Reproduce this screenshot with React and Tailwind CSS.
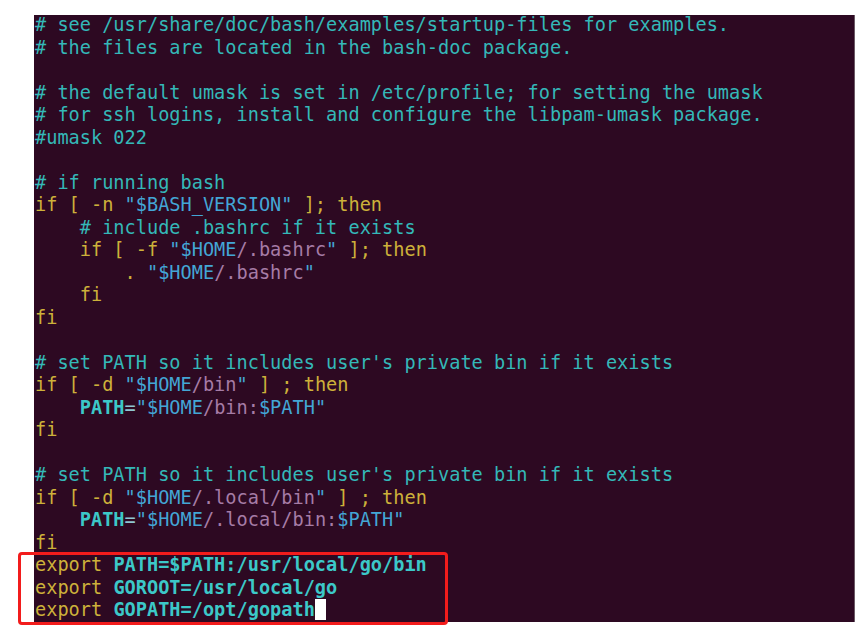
import React from 'react';

const C = {
  cm: 'text-[#34b8b8]',
  kw: 'text-[#cdb13a]',
  var: 'text-[#43a6d6]',
  str: 'text-[#a67ca6]',
  id: 'text-[#3cc8c8] font-bold',
  eq: 'text-[#8fc7d2]',
  pl: 'text-[#d8d8d8]',
};

// each line is a list of [text, colorKey]
const lines = [
  [['# see /usr/share/doc/bash/examples/startup-files for examples.', 'cm']],
  [['# the files are located in the bash-doc package.', 'cm']],
  [],
  [['# the default umask is set in /etc/profile; for setting the umask', 'cm']],
  [['# for ssh logins, install and configure the libpam-umask package.', 'cm']],
  [['#umask 022', 'cm']],
  [],
  [['# if running bash', 'cm']],
  [['if [ -n ', 'kw'], ['"$BASH_VERSION"', 'var'], [' ]; then', 'kw']],
  [['    # include .bashrc if it exists', 'cm']],
  [['    if [ -f ', 'kw'], ['"$HOME', 'var'], ['/.bashrc', 'str'], ['"', 'var'], [' ]; then', 'kw']],
  [['        . ', 'kw'], ['"$HOME', 'var'], ['/.bashrc', 'str'], ['"', 'var']],
  [['    fi', 'kw']],
  [['fi', 'kw']],
  [],
  [['# set PATH so it includes user\'s private bin if it exists', 'cm']],
  [['if [ -d ', 'kw'], ['"$HOME', 'var'], ['/bin', 'str'], ['"', 'var'], [' ] ; then', 'kw']],
  [['    ', 'pl'], ['PATH', 'id'], ['=', 'eq'], ['"$HOME', 'var'], ['/bin:', 'str'], ['$PATH"', 'var']],
  [['fi', 'kw']],
  [],
  [['# set PATH so it includes user\'s private bin if it exists', 'cm']],
  [['if [ -d ', 'kw'], ['"$HOME', 'var'], ['/.local/bin', 'str'], ['"', 'var'], [' ] ; then', 'kw']],
  [['    ', 'pl'], ['PATH', 'id'], ['=', 'eq'], ['"$HOME', 'var'], ['/.local/bin:', 'str'], ['$PATH"', 'var']],
  [['fi', 'kw']],
  [['export ', 'kw'], ['PATH=$PATH:/usr/local/go/bin', 'id']],
  [['export ', 'kw'], ['GOROOT=/usr/local/go', 'id']],
  [['export ', 'kw'], ['GOPATH=/opt/gopath', 'id']],
];

export default function App() {
  return (
    <div className="relative w-[863px] h-[632px] bg-white overflow-hidden">
      <div className="ml-[34px] mt-[15px] w-[821px] h-[607px] bg-[#2d0922] border-r border-[#6b5a66] overflow-hidden">
        <div
          className="pl-[1px] -mt-[1px] text-[18.6px] leading-[22.5px] whitespace-pre"
          style={{ fontFamily: '"DejaVu Sans Mono", "Liberation Mono", monospace' }}
        >
          {lines.map((parts, i) => (
            <div key={i} className="h-[22.5px]">
              {parts.map(([t, k], j) => (
                <span key={j} className={C[k]}>{t}</span>
              ))}
              {i === lines.length - 1 && (
                <span className="inline-block align-[-4px] w-[11px] h-[21px] bg-white" />
              )}
            </div>
          ))}
        </div>
      </div>
      {/* red highlight box over the export lines */}
      <div className="absolute left-[18px] top-[552px] w-[430px] h-[73px] border-[3px] border-[#f21c1c] rounded-[4px]" />
    </div>
  );
}
